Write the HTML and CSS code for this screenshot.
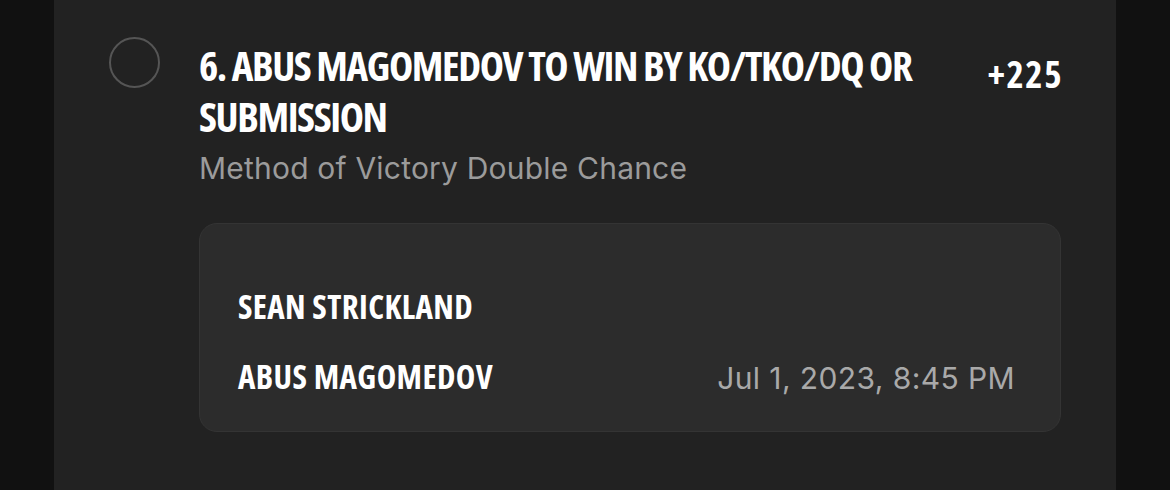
FILE: index.html
```html
<!DOCTYPE html>
<html>
<head>
<meta charset="utf-8">
<link rel="stylesheet" href="styles.css">
</head>
<body>
<div class="panel">
  <div class="pick">
    <div class="radio"></div>
    <div class="content">
      <div class="head">
        <div class="title">6. ABUS MAGOMEDOV TO WIN BY KO/TKO/DQ OR SUBMISSION</div>
        <div class="odds">+225</div>
      </div>
      <div class="market">Method of Victory Double Chance</div>
      <div class="card">
        <div class="fighter">SEAN STRICKLAND</div>
        <div class="row">
          <div class="fighter">ABUS MAGOMEDOV</div>
          <div class="date">Jul 1, 2023, 8:45 PM</div>
        </div>
      </div>
    </div>
  </div>
</div>
</body>
</html>
```

FILE: styles.css
```css
html, body {
  margin: 0;
  padding: 0;
  background: #111111;
  height: 490px;
  overflow: hidden;
}
.panel {
  margin: 0 54px;
  height: 490px;
  background: #222222;
  padding: 37px 55px 0 55px;
  box-sizing: border-box;
}
.pick {
  display: grid;
  grid-template-columns: 51px 1fr;
  column-gap: 39px;
}
.radio {
  width: 51px;
  height: 51px;
  box-sizing: border-box;
  border: 2px solid #555555;
  border-radius: 50%;
}
.content {
  display: flex;
  flex-direction: column;
  padding-top: 3px;
}
.head {
  display: flex;
  justify-content: space-between;
  align-items: flex-start;
  gap: 40px;
}
.title, .odds, .fighter {
  font-family: "Open Sans", sans-serif;
  font-stretch: 75%;
  font-weight: bold;
  color: #ffffff;
}
.title {
  font-size: 41px;
  line-height: 51px;
  letter-spacing: -1.4px;
}
.odds {
  font-size: 37px;
  line-height: 36px;
  margin-top: 16px;
  margin-right: -2px;
  letter-spacing: 1.5px;
}
.market {
  font-family: Inter, "Noto Sans", sans-serif;
  font-size: 30px;
  line-height: 36px;
  letter-spacing: 0.2px;
  color: #9b9b9b;
  margin-top: 8px;
}
.card {
  margin-top: 37px;
  background: #2c2c2c;
  border: 1px solid #343434;
  border-radius: 18px;
  padding: 65px 45px 35px 38px;
  display: flex;
  flex-direction: column;
  gap: 34px;
}
.row {
  display: flex;
  justify-content: space-between;
  align-items: baseline;
}
.fighter {
  font-size: 33px;
  line-height: 36px;
  letter-spacing: 0.4px;
}
.date {
  font-family: Inter, "Noto Sans", sans-serif;
  font-size: 30px;
  letter-spacing: 0.4px;
  color: #a9a9a9;
}
```
